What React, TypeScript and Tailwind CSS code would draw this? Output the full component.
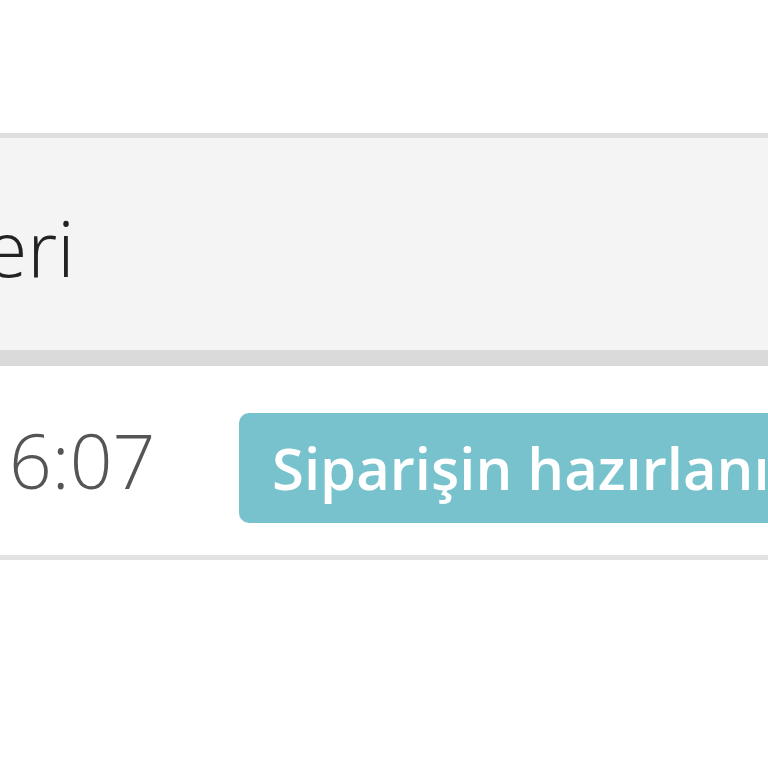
export default function App() {
  return (
    <div className="w-[768px] h-[768px] overflow-hidden bg-white font-['Open_Sans',sans-serif]">
      <div className="h-[133px]" />
      <div className="border-t-[5px] border-[#dedede] bg-[#f4f4f4] border-b-[16px] border-b-[#dadada] h-[233px] flex items-center">
        <span className="-ml-[15px] text-[77px] leading-none font-[350] text-[#222] pt-[6px]">eri</span>
      </div>
      <div className="h-[194px] border-b-[5px] border-[#e2e2e2] flex items-center pt-[14px]">
        <span className="ml-[9px] -mt-[14px] text-[75px] leading-none font-[350] text-[#555] w-[230px] shrink-0">6:07</span>
        <div className="shrink-0 h-[110px] pl-[33px] pr-[20px] rounded-[10px] bg-[#77c2cc] text-white font-semibold text-[58px] flex items-center whitespace-nowrap">
          Siparişin hazırlanıyor
        </div>
      </div>
    </div>
  );
}
